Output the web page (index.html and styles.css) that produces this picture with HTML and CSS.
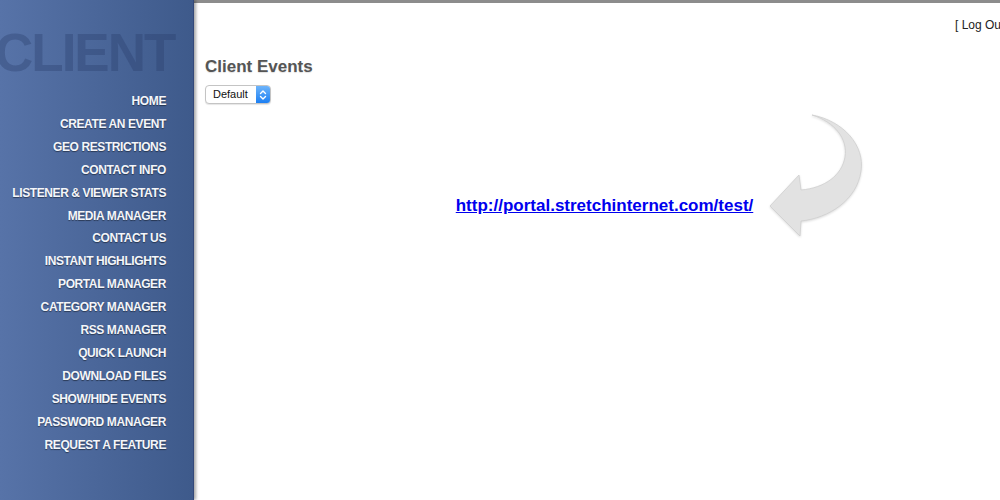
FILE: index.html
```html
<!DOCTYPE html>
<html lang="en">
<head>
    <meta charset="UTF-8">
    <meta name="viewport" content="width=device-width, initial-scale=1.0">
    <title>Client Events</title>
    <link rel="stylesheet" href="styles.css">
</head>
<body>
    <aside class="sidebar">
        <div class="brand">CLIENT</div>
        <ul class="nav">
            <li><a href="#">HOME</a></li>
            <li><a href="#">CREATE AN EVENT</a></li>
            <li><a href="#">GEO RESTRICTIONS</a></li>
            <li><a href="#">CONTACT INFO</a></li>
            <li><a href="#">LISTENER &amp; VIEWER STATS</a></li>
            <li><a href="#">MEDIA MANAGER</a></li>
            <li><a href="#">CONTACT US</a></li>
            <li><a href="#">INSTANT HIGHLIGHTS</a></li>
            <li><a href="#">PORTAL MANAGER</a></li>
            <li><a href="#">CATEGORY MANAGER</a></li>
            <li><a href="#">RSS MANAGER</a></li>
            <li><a href="#">QUICK LAUNCH</a></li>
            <li><a href="#">DOWNLOAD FILES</a></li>
            <li><a href="#">SHOW/HIDE EVENTS</a></li>
            <li><a href="#">PASSWORD MANAGER</a></li>
            <li><a href="#">REQUEST A FEATURE</a></li>
        </ul>
    </aside>

    <main class="content">
        <div class="topbar"></div>
        <div class="account">[ <a href="#">Log Out</a> ]</div>

        <h1>Client Events</h1>

        <div class="select">
            <span class="select-label">Default</span>
            <span class="stepper">
                <svg width="8" height="12" viewBox="0 0 8 12">
                    <path d="M1.5 4.5 L4 2 L6.5 4.5 M1.5 7.5 L4 10 L6.5 7.5" fill="none" stroke="#fff" stroke-width="1.4" stroke-linecap="round" stroke-linejoin="round"/>
                </svg>
            </span>
        </div>

        <div class="promo">
            <a class="portal-link" href="#">http://portal.stretchinternet.com/test/
                <svg class="arrow" width="100" height="130" viewBox="768 110 100 130">
                    <path d="M813 115 C845 121 866 146 862 171 C858 200 830 218 802 221 L801 236 L771 206 L800 175 L802 190 C826 188 843 175 846 157 C849 139 836 122 813 115 Z" fill="#e2e2e2" stroke="#cfcfcf" stroke-width="0.8"/>
                </svg>
            </a>
        </div>
    </main>
</body>
</html>
```

FILE: styles.css
```css
html, body {
    margin: 0;
    height: 100%;
}
body {
    display: flex;
    font-family: "Liberation Sans", Arial, sans-serif;
    overflow: hidden;
    background: #fff;
}
.sidebar {
    width: 193px;
    flex-shrink: 0;
    min-height: 100%;
    background: linear-gradient(to right, #5773a8, #3e5a8b);
    border-right: 1px solid #34497a;
    box-shadow: 2px 0 3px rgba(0, 0, 0, 0.35);
    position: relative;
    z-index: 1;
    overflow: hidden;
}
.brand {
    padding-top: 26px;
    margin-left: -5px;
    margin-bottom: 10px;
    font-size: 53px;
    line-height: 54px;
    font-weight: bold;
    letter-spacing: -2px;
    color: rgba(40, 60, 105, 0.35);
    white-space: nowrap;
}
.nav {
    list-style: none;
    margin: 0;
    padding: 0 27px 0 0;
    text-align: right;
    font-size: 12px;
}
.nav li {
    line-height: 22.9px;
}
.nav a {
    color: #f4f6fa;
    font-weight: bold;
    letter-spacing: -0.4px;
    text-decoration: none;
    text-shadow: 0 1px 1px rgba(0, 0, 0, 0.45);
    white-space: nowrap;
}
.content {
    flex: 1;
    padding-left: 11px;
    position: relative;
}
.topbar {
    height: 3px;
    margin-left: -11px;
    background: #8c8c8c;
}
.account {
    margin-top: 15px;
    margin-right: -11px;
    font-size: 12px;
    line-height: 14px;
    color: #222;
    text-align: right;
    white-space: nowrap;
}
.account a {
    color: #222;
    text-decoration: none;
}
h1 {
    margin: 25px 0 0;
    font-size: 17px;
    line-height: 20px;
    color: #555;
    text-shadow: 0 1px 1px rgba(0, 0, 0, 0.12);
}
.select {
    display: inline-flex;
    align-items: stretch;
    margin-top: 8px;
    width: 64px;
    height: 17px;
    border: 1px solid #c4c4c4;
    border-radius: 4px;
    background: #fff;
    box-shadow: 0 1px 1px rgba(0, 0, 0, 0.1);
    overflow: hidden;
}
.select-label {
    flex: 1;
    padding-left: 7px;
    font-size: 11px;
    line-height: 17px;
    color: #111;
}
.stepper {
    width: 14px;
    display: flex;
    align-items: center;
    justify-content: center;
    background: linear-gradient(#6db4fb, #1c7ff2);
}
.promo {
    margin-top: 92px;
    padding-left: 4px;
    text-align: center;
}
.portal-link {
    position: relative;
    display: inline-block;
    font-size: 17px;
    line-height: 20px;
    font-weight: bold;
    color: #0000ee;
}
.arrow {
    position: absolute;
    left: calc(100% + 14px);
    top: -86px;
    filter: drop-shadow(0 1px 1px rgba(0, 0, 0, 0.15));
}
```
